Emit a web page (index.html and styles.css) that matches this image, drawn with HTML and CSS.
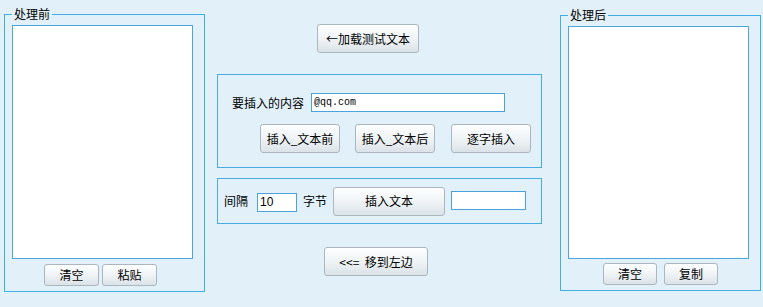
FILE: index.html
```html
<!DOCTYPE html>
<html lang="zh-CN">
<head>
<meta charset="utf-8">
<title>文本插入</title>
<link rel="stylesheet" href="styles.css">
</head>
<body>
<div class="page">
  <fieldset class="group group-left">
    <legend>处理前</legend>
    <textarea class="text-area"></textarea>
    <div class="btn-row btn-row-left">
      <button class="btn btn-small">清空</button>
      <button class="btn btn-small">粘贴</button>
    </div>
  </fieldset>

  <div class="middle">
    <button class="btn btn-big btn-load">←加载测试文本</button>

    <div class="box box-insert">
      <div class="row-content">
        <span class="label">要插入的内容</span>
        <input class="field field-content" type="text" value="@qq.com">
      </div>
      <div class="row-actions">
        <button class="btn btn-big btn-act">插入_文本前</button>
        <button class="btn btn-big btn-act">插入_文本后</button>
        <button class="btn btn-big btn-act">逐字插入</button>
      </div>
    </div>

    <div class="box box-interval">
      <span class="label">间隔</span>
      <input class="field field-num" type="text" value="10">
      <span class="label label-bytes">字节</span>
      <button class="btn btn-big btn-insert">插入文本</button>
      <input class="field field-out" type="text" value="">
    </div>

    <button class="btn btn-big btn-move">&lt;&lt;= &nbsp;移到左边</button>
  </div>

  <fieldset class="group group-right">
    <legend>处理后</legend>
    <textarea class="text-area"></textarea>
    <div class="btn-row btn-row-right">
      <button class="btn btn-small btn-narrow">清空</button>
      <button class="btn btn-small btn-narrow">复制</button>
    </div>
  </fieldset>
</div>
</body>
</html>
```

FILE: styles.css
```css
html, body {
  margin: 0;
  padding: 0;
  background: #e2f1f9;
}

body {
  font-family: "Noto Sans CJK SC", "Noto Sans", sans-serif;
  font-size: 12px;
  color: #000;
  width: 763px;
  height: 307px;
  overflow: hidden;
}

.page {
  display: flex;
  align-items: flex-start;
  padding-left: 4px;
}

.group {
  box-sizing: border-box;
  width: 201px;
  flex-shrink: 0;
  margin: 7px 0 0 0;
  padding: 4px 0 5px 7px;
  border: 1px solid #3fb0e6;
  min-width: 0;
}

.group-right {
  margin-top: 8px;
}

.group legend {
  padding: 0 2px;
  font-size: 12px;
  line-height: 14px;
}

.text-area {
  display: block;
  box-sizing: border-box;
  width: 181px;
  height: 234px;
  margin: 0;
  border: 1px solid #4aa6dd;
  background: #fff;
  resize: none;
  outline: none;
  padding: 2px;
}

.group-right .text-area {
  height: 233px;
}

.btn-row {
  display: flex;
  height: 22px;
}

.btn-row-left {
  margin-top: 5px;
  padding-left: 32px;
  gap: 3px;
}

.btn-row-right {
  margin-top: 4px;
  padding-left: 35px;
  gap: 7px;
}

.btn {
  box-sizing: border-box;
  flex-shrink: 0;
  margin: 0;
  padding: 0;
  border: 1px solid #abb6bf;
  border-radius: 3px;
  background: linear-gradient(#fdfeff 0%, #f1f5f7 45%, #dbe3e8 100%);
  font-family: "Noto Sans CJK SC", "Noto Sans", sans-serif;
  font-size: 12px;
  color: #000;
  line-height: 1;
}

.btn-small {
  width: 55px;
  height: 22px;
}

.btn-narrow {
  width: 54px;
}

.btn-big {
  height: 29px;
}

.middle {
  width: 355px;
  flex-shrink: 0;
  padding-left: 12px;
  box-sizing: border-box;
  display: flex;
  flex-direction: column;
  align-items: flex-start;
}

.btn-load {
  margin-top: 24px;
  margin-left: 100px;
  width: 102px;
}

.box {
  box-sizing: border-box;
  width: 325px;
  border: 1px solid #48ade3;
}

.box-insert {
  margin-top: 21px;
  height: 94px;
  padding: 18px 0 0 0;
}

.row-content {
  display: flex;
  align-items: center;
  padding-left: 14px;
  gap: 7px;
  height: 19px;
}

.label {
  white-space: nowrap;
  line-height: 14px;
  flex-shrink: 0;
}

.field {
  box-sizing: border-box;
  flex-shrink: 0;
  height: 19px;
  margin: 0;
  border: 1px solid #4aa3de;
  background: #fff;
  outline: none;
  padding: 0 2px;
}

.field-content {
  width: 194px;
  font-family: "Liberation Mono", monospace;
  font-size: 10px;
}

.row-actions {
  display: flex;
  margin-top: 12px;
  padding-left: 42px;
}

.btn-act {
  width: 80px;
  margin-right: 15px;
}

.btn-act:last-child {
  margin-left: 1px;
  margin-right: 0;
}

.box-interval {
  margin-top: 10px;
  height: 46px;
  display: flex;
  align-items: center;
  padding-left: 6px;
}

.field-num {
  width: 40px;
  margin-left: 9px;
  margin-top: 2px;
  font-family: "Liberation Sans", sans-serif;
  font-size: 12px;
}

.label-bytes {
  margin-left: 6px;
}

.btn-insert {
  width: 112px;
  margin-left: 6px;
}

.field-out {
  width: 75px;
  margin-left: 6px;
  margin-top: -2px;
}

.btn-move {
  margin-top: 23px;
  margin-left: 107px;
  width: 104px;
}
```
